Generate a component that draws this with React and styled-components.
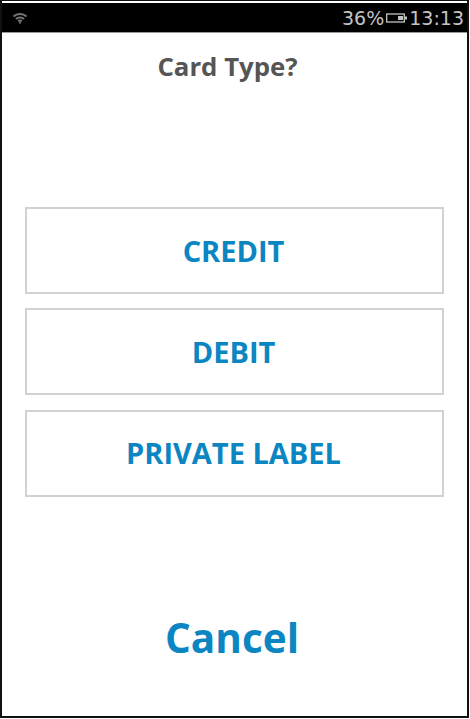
import React from 'react';
import styled, { createGlobalStyle } from 'styled-components';

const GlobalStyle = createGlobalStyle`
  html, body {
    margin: 0;
    padding: 0;
    background: #fff;
  }
`;

const Page = styled.div`
  width: 470px;
  height: 719px;
  background: #fff;
`;

const Frame = styled.div`
  box-sizing: border-box;
  width: 469px;
  height: 718px;
  border: 2px solid #111;
  border-top-width: 1px;
  padding-top: 2px;
  background: #fff;
  display: flex;
  flex-direction: column;
  font-family: "Open Sans", "Noto Sans", sans-serif;
`;

const StatusBar = styled.div`
  height: 30px;
  flex: none;
  box-sizing: border-box;
  background: #000;
  border-bottom: 1px solid #999;
  color: #c4c4c4;
  display: flex;
  align-items: center;
  justify-content: space-between;
  padding: 0 3px 0 10px;
  font-family: "DejaVu Sans", sans-serif;
  font-size: 19px;
`;

const StatusRight = styled.div`
  display: flex;
  align-items: center;
  gap: 2px;
`;

const Title = styled.h1`
  margin: 0;
  padding: 17px 14px 0 0;
  height: 174px;
  box-sizing: border-box;
  flex: none;
  text-align: center;
  font-size: 25.8px;
  line-height: 32px;
  font-weight: 700;
  color: #555;
`;

const Options = styled.div`
  display: flex;
  flex-direction: column;
  gap: 14.4px;
  padding: 0 23px;
`;

const Option = styled.button`
  box-sizing: border-box;
  height: 87px;
  width: 100%;
  padding: 0 2px 1px 0;
  background: #fff;
  border: 2px solid #d2d2d2;
  border-radius: 0;
  color: #0b86c2;
  font-family: inherit;
  font-size: 29px;
  font-weight: 700;
`;

const Cancel = styled.button`
  margin-top: 115px;
  align-self: center;
  background: none;
  border: none;
  padding: 0 5px 0 0;
  color: #0b86c2;
  font-family: inherit;
  font-size: 40.5px;
  line-height: 52px;
  font-weight: 700;
`;

const WifiIcon = () => (
  <svg width="16" height="12" viewBox="0 0 16 12" fill="none" stroke="#777" strokeWidth="2">
    <path d="M1.5 4.5C5 1.2 11 1.2 14.5 4.5" />
    <path d="M4 7C6.2 5 9.8 5 12 7" />
    <path d="M6.2 9.2C7.2 8.4 8.8 8.4 9.8 9.2" />
    <circle cx="8" cy="10.8" r="1" fill="#777" stroke="none" />
  </svg>
);

const BatteryIcon = () => (
  <svg width="21" height="10" viewBox="0 0 21 10" fill="none">
    <rect x="0.7" y="1" width="17.6" height="8" stroke="#c4c4c4" strokeWidth="1.3" />
    <rect x="12" y="3" width="5" height="4" fill="#c4c4c4" />
    <rect x="19" y="3.5" width="2" height="3" fill="#c4c4c4" />
  </svg>
);

export default function App() {
  return (
    <Page>
      <GlobalStyle />
      <Frame>
        <StatusBar>
          <WifiIcon />
          <StatusRight>
            <span>36%</span>
            <BatteryIcon />
            <span>13:13</span>
          </StatusRight>
        </StatusBar>
        <Title>Card Type?</Title>
        <Options>
          <Option>CREDIT</Option>
          <Option>DEBIT</Option>
          <Option>PRIVATE LABEL</Option>
        </Options>
        <Cancel>Cancel</Cancel>
      </Frame>
    </Page>
  );
}
